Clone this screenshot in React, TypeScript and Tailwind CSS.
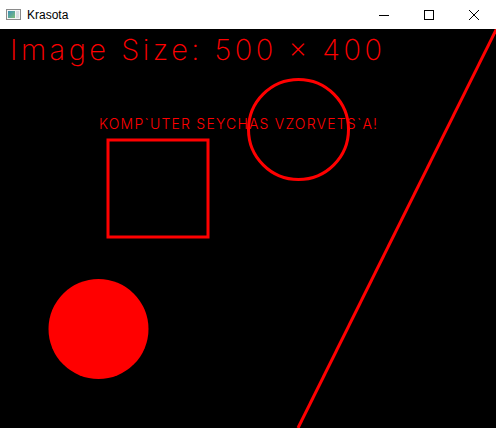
import React from "react";

const red = "#ff0000";

function AppIcon() {
  return (
    <svg width="15" height="11" viewBox="0 0 15 11" className="block">
      <defs>
        <linearGradient id="ico" x1="0" y1="0" x2="1" y2="1">
          <stop offset="0" stopColor="#3a8fb7" />
          <stop offset="1" stopColor="#7fbf7a" />
        </linearGradient>
      </defs>
      <rect x="0.5" y="0.5" width="14" height="10" fill="#f4f4f4" stroke="#8a8a8a" />
      <rect x="2" y="2" width="7" height="7" fill="url(#ico)" />
      <rect x="10" y="2" width="3" height="7" fill="#d8dde2" />
    </svg>
  );
}

function CaptionButton({ children }: { children: React.ReactNode }) {
  return <div className="flex h-full w-[45px] items-center justify-center">{children}</div>;
}

function TitleBar() {
  return (
    <div className="flex h-[29px] items-center bg-white">
      <div className="ml-[6px] mt-[-1px]">
        <AppIcon />
      </div>
      <span className="ml-[6px] mt-[1px] text-[12px] text-black" style={{ fontFamily: '"Liberation Sans", Arial, sans-serif' }}>
        Krasota
      </span>
      <div className="ml-auto flex h-full">
        <CaptionButton>
          <svg width="10" height="10" viewBox="0 0 10 10">
            <line x1="0" y1="5.5" x2="10" y2="5.5" stroke="#000" strokeWidth="1" />
          </svg>
        </CaptionButton>
        <CaptionButton>
          <svg width="10" height="10" viewBox="0 0 10 10">
            <rect x="0.5" y="0.5" width="9" height="9" fill="none" stroke="#000" strokeWidth="1" />
          </svg>
        </CaptionButton>
        <CaptionButton>
          <svg width="10" height="10" viewBox="0 0 10 10">
            <path d="M0 0 L10 10 M10 0 L0 10" stroke="#000" strokeWidth="1" />
          </svg>
        </CaptionButton>
      </div>
    </div>
  );
}

function Canvas() {
  const font = 'Inter, "DejaVu Sans", sans-serif';
  return (
    <svg width="496" height="399" viewBox="0 0 496 399" className="block bg-black">
      <text
        x="10"
        y="31"
        fill={red}
        fontSize="29"
        fontWeight="200"
        fontFamily={font}
        textLength="372"
        lengthAdjust="spacing"
      >
        Image Size: 500 x 400
      </text>
      <text
        x="99"
        y="100"
        fill={red}
        fontSize="14"
        fontWeight="300"
        fontFamily={font}
        textLength="278"
        lengthAdjust="spacing"
      >
        KOMP`UTER SEYCHAS VZORVETS`A!
      </text>
      <rect x="108" y="111" width="100" height="97" fill="none" stroke={red} strokeWidth="3" />
      <circle cx="298.5" cy="100.5" r="50" fill="none" stroke={red} strokeWidth="3" />
      <circle cx="98.5" cy="300" r="50" fill={red} />
      <line x1="496.5" y1="0" x2="298" y2="399" stroke={red} strokeWidth="3" />
    </svg>
  );
}

export default function App() {
  return (
    <div className="h-[428px] w-[496px] overflow-hidden bg-black">
      <TitleBar />
      <Canvas />
    </div>
  );
}
